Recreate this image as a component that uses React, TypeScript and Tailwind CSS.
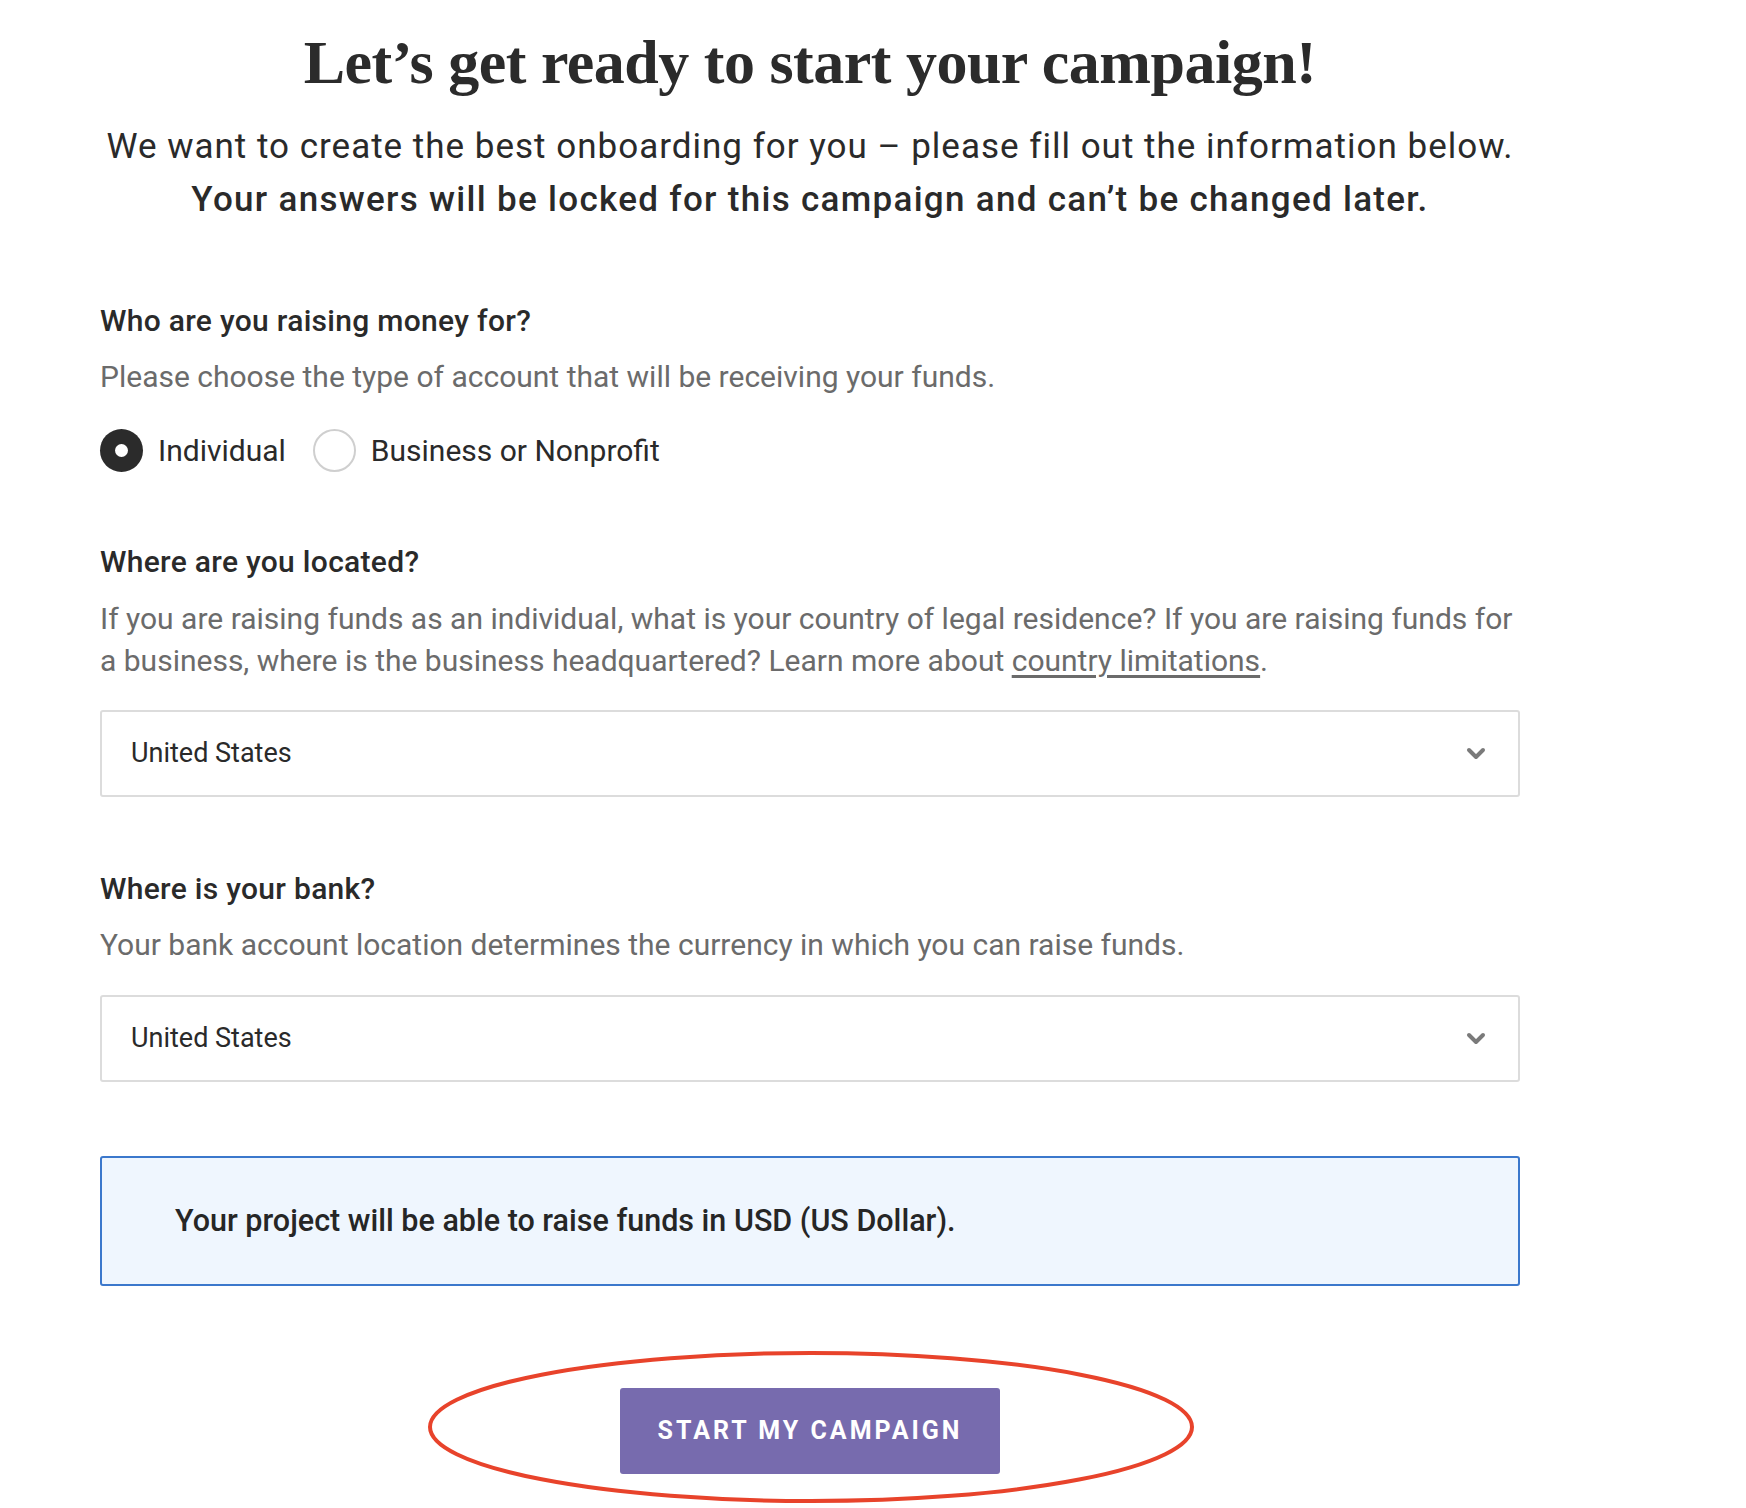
import React from "react";

function Chevron() {
  return (
    <svg width="20" height="14" viewBox="0 0 20 14" className="shrink-0">
      <polyline points="3,3 10,10 17,3" fill="none" stroke="#7a7a7a" strokeWidth="4" strokeLinecap="round" strokeLinejoin="round" />
    </svg>
  );
}

function Select({ value }: { value: string }) {
  return (
    <div className="flex h-[87px] w-full items-center justify-between rounded-[3px] border-2 border-[#dcdcdc] bg-white pl-[29px] pr-[32px]">
      <span className="text-[27px] text-[#2a2a2a]">{value}</span>
      <Chevron />
    </div>
  );
}

export default function App() {
  return (
    <div className="min-h-[1508px] w-[1746px] bg-white font-['Roboto',sans-serif] text-[#2a2a2a]">
      <div className="ml-[100px] w-[1420px] pt-[26px]">
        <h1 className="text-center font-['Liberation_Serif',serif] text-[62px] font-bold leading-[72px] tracking-[-0.5px] text-[#2b2b2b]">
          Let’s get ready to start your campaign!
        </h1>
        <p className="mt-[22px] text-center text-[35px] leading-[53px] tracking-[1px] text-[#2a2a2a]">
          We want to create the best onboarding for you – please fill out the information below.
          <br />
          <span className="font-medium tracking-[1.3px]">Your answers will be locked for this campaign and can’t be changed later.</span>
        </p>

        <div className="mt-[75px]">
          <h2 className="text-[30px] font-medium leading-[40px] tracking-[0.3px]">Who are you raising money for?</h2>
          <p className="mt-[16px] text-[30px] leading-[40px] text-[#6b6b6b]">
            Please choose the type of account that will be receiving your funds.
          </p>
          <div className="mt-[31px] flex items-center">
            <div className="flex h-[43px] w-[43px] items-center justify-center rounded-full bg-[#2b2b2b]">
              <div className="h-[13px] w-[13px] rounded-full bg-white" />
            </div>
            <span className="ml-[15px] text-[30px] text-[#2a2a2a]">Individual</span>
            <div className="ml-[27px] h-[43px] w-[43px] rounded-full border-2 border-[#cfcfcf] bg-white" />
            <span className="ml-[15px] text-[30px] text-[#2a2a2a]">Business or Nonprofit</span>
          </div>
        </div>

        <div className="mt-[69px]">
          <h2 className="text-[30px] font-medium leading-[40px] tracking-[0.3px]">Where are you located?</h2>
          <p className="mt-[16px] text-[30px] leading-[42px] text-[#6b6b6b]">
            If you are raising funds as an individual, what is your country of legal residence? If you are raising funds for a business, where is the business headquartered? Learn more about <u className="underline-offset-[4px]">country limitations</u>.
          </p>
          <div className="mt-[28px]">
            <Select value="United States" />
          </div>
        </div>

        <div className="mt-[72px]">
          <h2 className="text-[30px] font-medium leading-[40px] tracking-[0.3px]">Where is your bank?</h2>
          <p className="mt-[16px] text-[30px] leading-[40px] text-[#6b6b6b]">
            Your bank account location determines the currency in which you can raise funds.
          </p>
          <div className="mt-[30px]">
            <Select value="United States" />
          </div>
        </div>

        <div className="mt-[74px] flex h-[130px] items-center rounded-[3px] border-2 border-[#3b78cc] bg-[#eff6fe] pl-[73px]">
          <span className="text-[30.5px] font-medium text-[#262626]">Your project will be able to raise funds in USD (US Dollar).</span>
        </div>

        <div className="relative mt-[102px] flex justify-center">
          <button className="relative z-10 flex h-[86px] w-[380px] items-center justify-center rounded-[3px] bg-[#776bae] text-[25px] font-bold tracking-[3px] text-white">
            START MY CAMPAIGN
          </button>
          <svg className="pointer-events-none absolute left-[326px] top-[-40px] z-20" width="770" height="158" viewBox="0 0 770 158">
            <ellipse cx="385" cy="79" rx="381" ry="74" fill="none" stroke="#e8432b" strokeWidth="4" />
          </svg>
        </div>
      </div>
    </div>
  );
}
